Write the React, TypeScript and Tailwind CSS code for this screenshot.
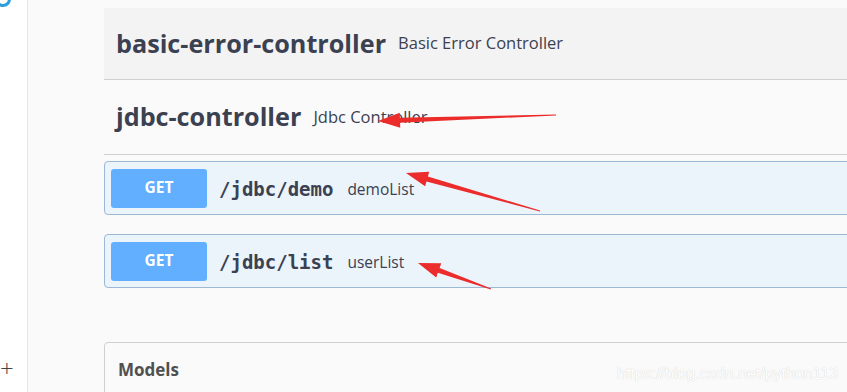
import React from "react";

type Pt = [number, number];

// red annotation arrow: tapering shaft + triangular head
function arrowPoints(tip: Pt, tail: Pt, headLen = 22, headHalf = 7.5, shaftHalf = 2.6) {
  const dx = tail[0] - tip[0];
  const dy = tail[1] - tip[1];
  const len = Math.hypot(dx, dy);
  const ux = dx / len;
  const uy = dy / len;
  const nx = -uy;
  const ny = ux;
  const bx = tip[0] + ux * headLen;
  const by = tip[1] + uy * headLen;
  const pts: Pt[] = [
    tip,
    [bx + nx * headHalf, by + ny * headHalf],
    [bx + nx * shaftHalf, by + ny * shaftHalf],
    [tail[0] + nx * 0.4, tail[1] + ny * 0.4],
    [tail[0] - nx * 0.4, tail[1] - ny * 0.4],
    [bx - nx * shaftHalf, by - ny * shaftHalf],
    [bx - nx * headHalf, by - ny * headHalf],
  ];
  return pts.map((p) => p.join(",")).join(" ");
}

const arrows: { tip: Pt; tail: Pt }[] = [
  { tip: [378, 121], tail: [556, 115] },
  { tip: [406, 173], tail: [540, 211] },
  { tip: [418, 263], tail: [491, 289] },
];

function Operation({ path, summary }: { path: string; summary: string }) {
  return (
    <div className="flex items-center h-[54px] -mr-[10px] border border-[#9db8d3] rounded-[4px] bg-[#ebf3fb] pl-[6px]">
      <div className="flex items-center justify-center w-[96px] h-[39px] rounded-[3px] bg-[#61affe] text-white font-bold text-[15.5px]">
        GET
      </div>
      <span className="ml-[12px] pt-[3px] font-['DejaVu_Sans_Mono',monospace] font-bold text-[19px] text-[#3b4151]">
        {path}
      </span>
      <span className="ml-[14px] pt-[3px] text-[15.5px] text-[#3b4151]">{summary}</span>
    </div>
  );
}

export default function App() {
  return (
    <div className="relative flex w-[847px] h-[392px] overflow-hidden bg-[#fafafa] font-['Open_Sans',sans-serif]">
      {/* Sidebar */}
      <aside className="relative w-[28px] shrink-0 bg-white border-r border-[#e6e6e6] flex flex-col justify-end pb-[12px]">
        <svg className="absolute left-0 top-0" width="14" height="12" viewBox="0 0 14 12">
          <circle cx="3" cy="-1" r="6.5" fill="none" stroke="#2d9fd8" strokeWidth="3" />
        </svg>
        <span className="text-[24px] leading-none text-[#444] font-light">+</span>
      </aside>

      {/* Main */}
      <main className="flex-1 pl-[76px] pt-[8px]">
        <div className="flex items-center h-[72px] pl-[12px] bg-[#f3f3f3] border-b border-[#cfcfcf]">
          <h3 className="text-[25.2px] font-bold text-[#3b4151]">basic-error-controller</h3>
          <span className="ml-[12px] text-[16.5px] text-[#3b4151]">Basic Error Controller</span>
        </div>
        <div className="flex items-center h-[75px] pl-[12px] border-b border-[#cfcfcf]">
          <h3 className="text-[25.2px] font-bold text-[#3b4151]">jdbc-controller</h3>
          <span className="ml-[12px] text-[16.5px] text-[#3b4151]">Jdbc Controller</span>
        </div>

        <div className="mt-[6px] flex flex-col gap-[19px]">
          <Operation path="/jdbc/demo" summary="demoList" />
          <Operation path="/jdbc/list" summary="userList" />
        </div>

        <div className="mt-[54px] -mr-[10px] h-[80px] rounded-[4px] border border-[#cfcfcf] bg-[#fafafa] pl-[13px] pt-[14px]">
          <h4 className="text-[17px] font-bold text-[#505050]">Models</h4>
        </div>
      </main>

      {/* annotation arrows */}
      <svg className="absolute left-0 top-0 pointer-events-none" width="847" height="392">
        {arrows.map((a, i) => (
          <polygon key={i} points={arrowPoints(a.tip, a.tail)} fill="#ec2b2b" />
        ))}
      </svg>

      {/* watermark */}
      <span className="absolute left-[617px] top-[362px] text-[16px] text-white [text-shadow:0_0_1px_#c4c4c4] font-['Liberation_Sans',sans-serif]">
        https://blog.csdn.net/python113
      </span>
    </div>
  );
}
